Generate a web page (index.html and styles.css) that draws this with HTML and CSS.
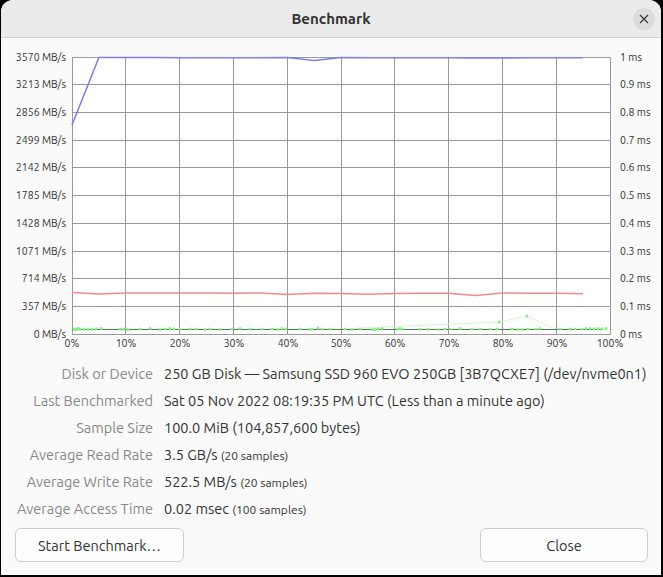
FILE: index.html
```html
<!DOCTYPE html>
<html>
<head>
<meta charset="utf-8">
<link rel="stylesheet" href="styles.css">
</head>
<body>
<div class="window">
  <header class="titlebar">
    <span class="title">Benchmark</span>
    <button class="close-x" aria-label="Close">
      <svg width="10" height="10" viewBox="0 0 10 10"><path d="M1 1L9 9M9 1L1 9" stroke="#3d3d3d" stroke-width="1.3" fill="none"/></svg>
    </button>
  </header>
  <svg class="chart" width="660" height="318" viewBox="1 38 660 318">
    <rect x="72.5" y="57.5" width="538" height="277" fill="#ffffff"/>
    <g stroke="#9a9a9a" stroke-width="1" fill="none">
      <path d="M72.5 57.5V334.5M125.5 57.5V334.5M179.5 57.5V334.5M233.5 57.5V334.5M287.5 57.5V334.5M341.5 57.5V334.5M394.5 57.5V334.5M448.5 57.5V334.5M502.5 57.5V334.5M556.5 57.5V334.5M610.5 57.5V334.5"/>
      <path d="M72.5 57.5H610.5M72.5 84.5H610.5M72.5 112.5H610.5M72.5 140.5H610.5M72.5 167.5H610.5M72.5 195.5H610.5M72.5 223.5H610.5M72.5 251.5H610.5M72.5 278.5H610.5M72.5 306.5H610.5M72.5 334.5H610.5"/>
    </g>
    <g class="ylab" text-anchor="end">
      <text x="66" y="61">3570 MB/s</text>
      <text x="66" y="88">3213 MB/s</text>
      <text x="66" y="116">2856 MB/s</text>
      <text x="66" y="144">2499 MB/s</text>
      <text x="66" y="171">2142 MB/s</text>
      <text x="66" y="199">1785 MB/s</text>
      <text x="66" y="227">1428 MB/s</text>
      <text x="66" y="255">1071 MB/s</text>
      <text x="66" y="282">714 MB/s</text>
      <text x="66" y="310">357 MB/s</text>
      <text x="66" y="338">0 MB/s</text>
    </g>
    <g class="ylab" text-anchor="start">
      <text x="620" y="61">1 ms</text>
      <text x="620" y="88">0.9 ms</text>
      <text x="620" y="116">0.8 ms</text>
      <text x="620" y="144">0.7 ms</text>
      <text x="620" y="171">0.6 ms</text>
      <text x="620" y="199">0.5 ms</text>
      <text x="620" y="227">0.4 ms</text>
      <text x="620" y="255">0.3 ms</text>
      <text x="620" y="282">0.2 ms</text>
      <text x="620" y="310">0.1 ms</text>
      <text x="620" y="338">0 ms</text>
    </g>
    <g class="ylab" text-anchor="middle">
      <text x="72" y="347">0%</text>
      <text x="126" y="347">10%</text>
      <text x="180" y="347">20%</text>
      <text x="234" y="347">30%</text>
      <text x="288" y="347">40%</text>
      <text x="341" y="347">50%</text>
      <text x="395" y="347">60%</text>
      <text x="449" y="347">70%</text>
      <text x="503" y="347">80%</text>
      <text x="557" y="347">90%</text>
      <text x="610" y="347">100%</text>
    </g>
    <polyline fill="none" stroke="#d9f4d9" stroke-width="1" points="350,328.5 499,322 527,316 555,329"/>
    <line x1="72" y1="329.5" x2="602" y2="329.5" stroke="#4f7f4f" stroke-width="1"/>
    <g fill="#7ff07f">
      <circle cx="74" cy="329" r="1.5"/><circle cx="76" cy="329.5" r="1.5"/><circle cx="78" cy="328.5" r="1.5"/><circle cx="80" cy="329" r="1.5"/><circle cx="84" cy="329" r="1.5"/><circle cx="88" cy="329.5" r="1.5"/><circle cx="92" cy="329" r="1.5"/><circle cx="96" cy="329" r="1.5"/><circle cx="101" cy="328.5" r="1.5"/>
      <circle cx="120" cy="329" r="1.5"/><circle cx="124" cy="329" r="1.5"/><circle cx="128" cy="329.5" r="1.5"/><circle cx="140" cy="329" r="1.5"/><circle cx="150" cy="328.5" r="1.5"/><circle cx="160" cy="329.5" r="1.5"/><circle cx="165" cy="329" r="1.5"/><circle cx="170" cy="328.5" r="1.5"/><circle cx="174" cy="329" r="1.5"/><circle cx="180" cy="329.5" r="1.5"/>
      <circle cx="190" cy="329" r="1.5"/><circle cx="196" cy="329" r="1.5"/><circle cx="205" cy="329.5" r="1.5"/><circle cx="210" cy="329" r="1.5"/><circle cx="220" cy="329.5" r="1.5"/><circle cx="232" cy="329" r="1.5"/><circle cx="240" cy="328.5" r="1.5"/><circle cx="250" cy="329" r="1.5"/><circle cx="262" cy="329" r="1.5"/>
      <circle cx="272" cy="329" r="1.5"/><circle cx="278" cy="329.5" r="1.5"/><circle cx="282" cy="328.5" r="1.5"/><circle cx="286" cy="329" r="1.5"/><circle cx="300" cy="329" r="1.5"/><circle cx="310" cy="329.5" r="1.5"/><circle cx="312" cy="329" r="1.5"/><circle cx="318" cy="328" r="1.5"/><circle cx="322" cy="329" r="1.5"/><circle cx="330" cy="329" r="1.5"/>
      <circle cx="345" cy="329" r="1.5"/><circle cx="352" cy="329.5" r="1.5"/><circle cx="360" cy="329" r="1.5"/><circle cx="372" cy="329.5" r="1.5"/><circle cx="375" cy="329.5" r="1.5"/><circle cx="378" cy="329" r="1.5"/><circle cx="382" cy="328.5" r="1.5"/><circle cx="398" cy="329" r="1.5"/><circle cx="400" cy="328.5" r="1.5"/><circle cx="402" cy="329" r="1.5"/>
      <circle cx="420" cy="329" r="1.5"/><circle cx="428" cy="329" r="1.5"/><circle cx="438" cy="329.5" r="1.5"/><circle cx="445" cy="329" r="1.5"/><circle cx="450" cy="329" r="1.5"/><circle cx="460" cy="328.5" r="1.5"/><circle cx="472" cy="329" r="1.5"/><circle cx="480" cy="329" r="1.5"/><circle cx="490" cy="329" r="1.5"/><circle cx="497" cy="329" r="1.5"/>
      <circle cx="499" cy="322" r="1.5"/><circle cx="527" cy="316" r="1.5"/>
      <circle cx="512" cy="329" r="1.5"/><circle cx="518" cy="329.5" r="1.5"/><circle cx="522" cy="329.5" r="1.5"/><circle cx="528" cy="329" r="1.5"/><circle cx="536" cy="329" r="1.5"/><circle cx="540" cy="328.5" r="1.5"/><circle cx="560" cy="329" r="1.5"/><circle cx="570" cy="329" r="1.5"/><circle cx="575" cy="329" r="1.5"/>
      <circle cx="582" cy="329" r="1.5"/><circle cx="586" cy="328.5" r="1.5"/><circle cx="590" cy="328.5" r="1.5"/><circle cx="594" cy="329" r="1.5"/><circle cx="598" cy="328.5" r="1.5"/><circle cx="602" cy="329" r="1.5"/><circle cx="606" cy="328.5" r="1.5"/>
    </g>
    <polyline fill="none" stroke="#f28a8a" stroke-width="1.6" stroke-linejoin="round" points="72,292.5 98.9,294 125.8,293 152.7,293 179.6,293 206.5,293 233.4,293.3 260.3,293 287.2,294.5 314.1,293.3 341,293.5 367.9,294.2 394.8,293.5 421.7,293.3 448.6,293.2 475.5,295.5 502.4,293 529.3,293.2 556.2,293.3 583.1,293.7"/>
    <polyline fill="none" stroke="#7f7ff2" stroke-width="1.6" stroke-linejoin="round" points="72,125 98.9,57.5 125.8,57.5 152.7,57.5 179.6,57.8 206.5,57.8 233.4,57.8 260.3,57.8 287.2,57.5 314.1,60.5 341,57.5 367.9,57.8 394.8,57.8 421.7,57.8 448.6,57.8 475.5,58 502.4,58 529.3,57.8 556.2,57.8 583.1,57.8"/>
  </svg>
  <dl class="info">
    <dt>Disk or Device</dt><dd>250 GB Disk — Samsung SSD 960 EVO 250GB [3B7QCXE7] (/dev/nvme0n1)</dd>
    <dt>Last Benchmarked</dt><dd>Sat 05 Nov 2022 08:19:35 PM UTC (Less than a minute ago)</dd>
    <dt>Sample Size</dt><dd>100.0 MiB (104,857,600 bytes)</dd>
    <dt>Average Read Rate</dt><dd>3.5 GB/s <small>(20 samples)</small></dd>
    <dt>Average Write Rate</dt><dd>522.5 MB/s <small>(20 samples)</small></dd>
    <dt>Average Access Time</dt><dd>0.02 msec <small>(100 samples)</small></dd>
  </dl>
  <div class="actions">
    <button class="btn btn-start">Start Benchmark…</button>
    <button class="btn btn-close">Close</button>
  </div>
</div>
</body>
</html>
```

FILE: styles.css
```css
html, body {
  margin: 0;
  padding: 0;
  background: #000;
  width: 663px;
  height: 577px;
  overflow: hidden;
}
body {
  font-family: "Ubuntu", Lato, "Liberation Sans", sans-serif;
  color: #333;
}
.window {
  margin-left: 1px;
  width: 660px;
  height: 575px;
  background: #fafafa;
  border-radius: 12px 12px 0 0;
  overflow: hidden;
  display: flex;
  flex-direction: column;
}
.titlebar {
  height: 37px;
  flex: none;
  background: #ebebeb;
  border-bottom: 1px solid #d2d2d2;
  display: flex;
  align-items: center;
  justify-content: center;
  position: relative;
}
.title {
  font-weight: bold;
  font-size: 15px;
  color: #333;
}
.close-x {
  position: absolute;
  right: 6px;
  top: 8px;
  width: 22px;
  height: 22px;
  border-radius: 50%;
  border: none;
  background: #dcdcdc;
  padding: 0;
  display: flex;
  align-items: center;
  justify-content: center;
}
.chart {
  display: block;
  flex: none;
}
.ylab {
  font-size: 10.5px;
  fill: #333;
  font-family: "Ubuntu", Lato, "Liberation Sans", sans-serif;
}
.info {
  margin: 4px 0 0 0;
  display: grid;
  grid-template-columns: 152px auto;
  column-gap: 11px;
  grid-auto-rows: 27px;
  align-items: center;
  font-size: 14.5px;
}
.info dt {
  text-align: right;
  color: #888;
  white-space: nowrap;
}
.info dd {
  margin: 0;
  color: #333;
  white-space: nowrap;
}
.info small {
  font-size: 12px;
}
.actions {
  margin-top: 6px;
  padding: 0 13px 0 14px;
  display: flex;
  justify-content: space-between;
}
.btn {
  height: 34px;
  border: 1px solid #cdcdcd;
  border-radius: 6px;
  background: #fdfdfd;
  font-family: "Ubuntu", Lato, "Liberation Sans", sans-serif;
  font-size: 14.5px;
  color: #333;
  padding: 0;
}
.btn-start { width: 169px; }
.btn-close { width: 168px; }
```
